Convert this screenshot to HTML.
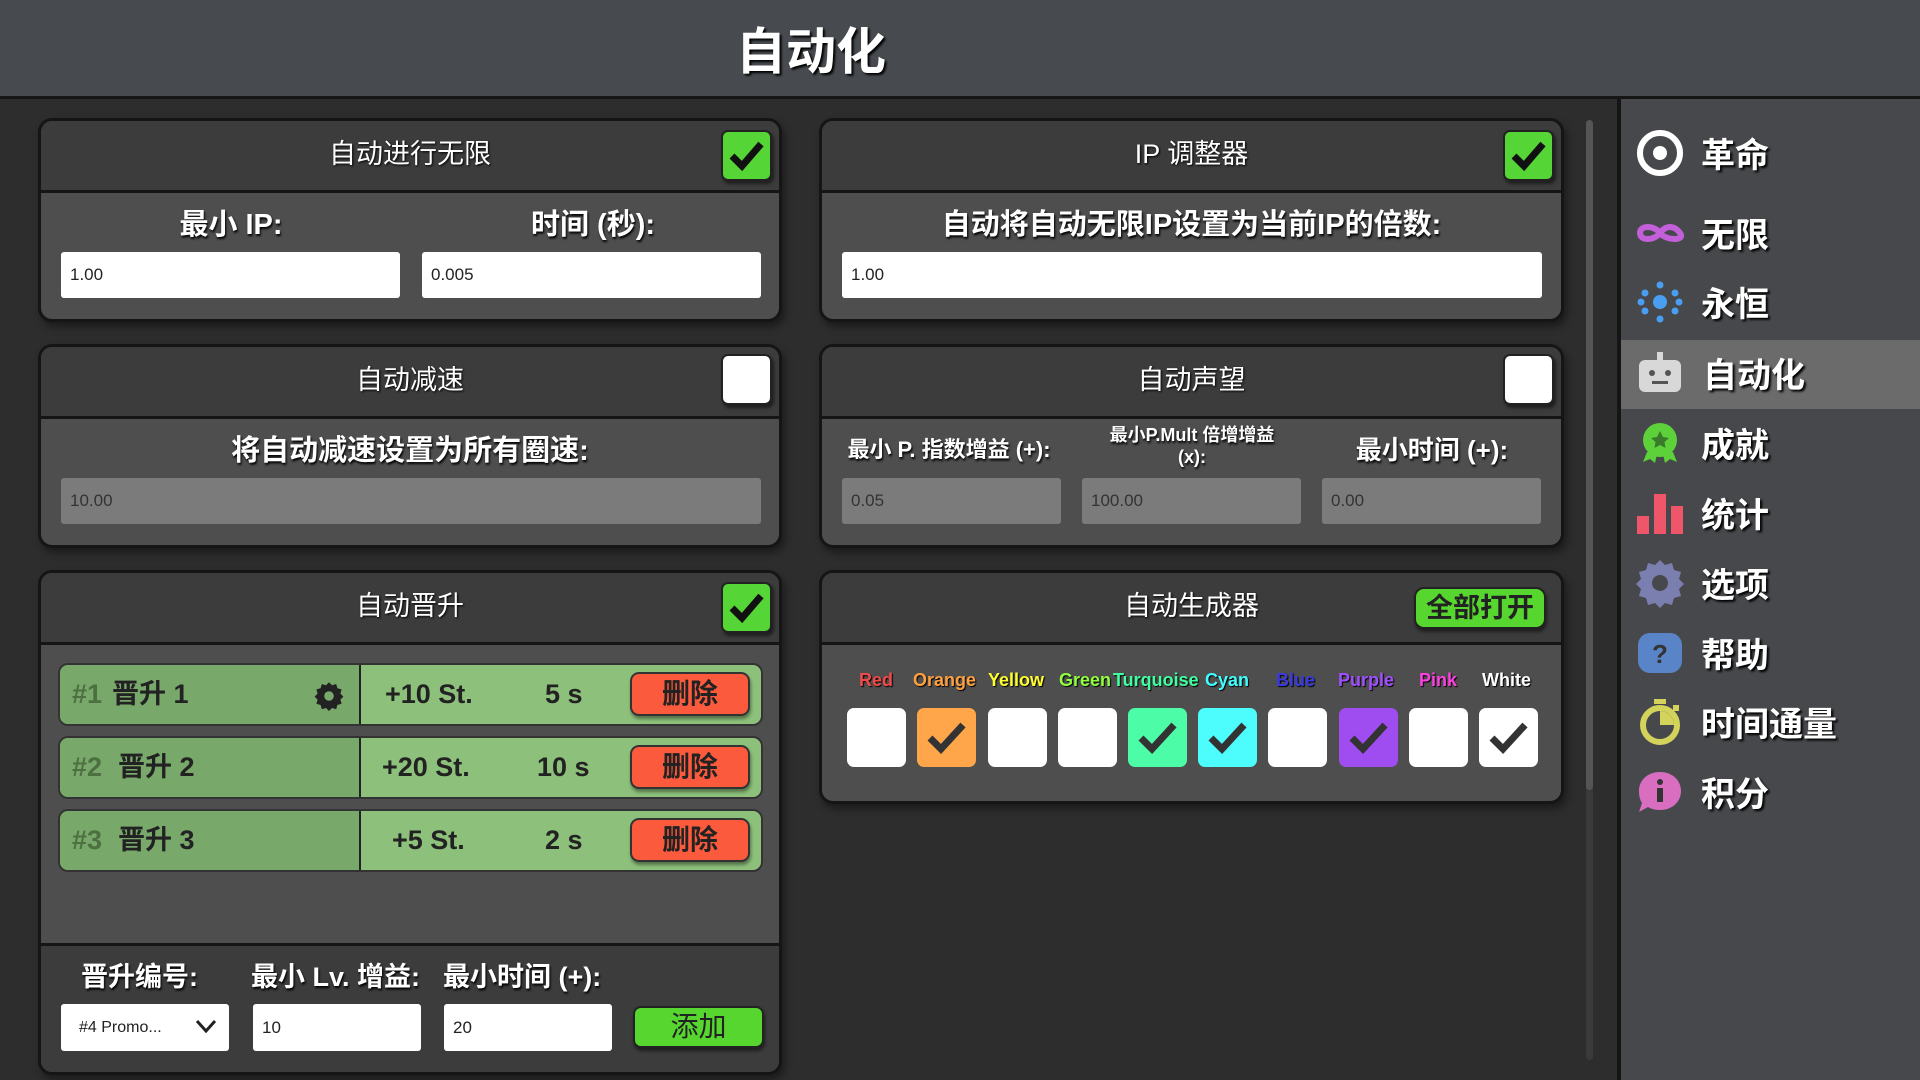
<!DOCTYPE html><html><head><meta charset="utf-8"><style>
*{box-sizing:border-box;margin:0;padding:0}
body{width:1920px;height:1080px;background:#2d2d2d;font-family:"Liberation Sans","Noto Sans CJK SC",sans-serif;color:#fff;position:relative;overflow:hidden}
.a{position:absolute}
#hdr{left:0;top:0;width:1920px;height:99px;background:#474b4f;border-bottom:3px solid #151515}
#hdr span{position:absolute;left:736px;top:12px;font-size:50px;font-weight:bold;text-shadow:2px 2px 2px #000}
.p{position:absolute;border:3px solid #151515;border-radius:14px;background:#4e4e4e;overflow:hidden;box-shadow:3px 5px 8px rgba(0,0,0,.4)}
.ph{position:absolute;left:0;top:0;right:0;background:#3c3c3c;border-bottom:3px solid #151515;font-size:27px;text-align:center;text-shadow:1px 1px 2px #000}
.cb{position:absolute;width:51px;height:51px;border-radius:7px;background:#fff;border:2px solid #222;box-shadow:2px 3px 3px rgba(0,0,0,.5)}
.cb.on{background:#56d636}
.lbl{position:absolute;font-size:29px;font-weight:bold;text-align:center;text-shadow:1px 2px 2px #000}
.in{position:absolute;background:#fff;color:#222;font-size:17px;padding-left:9px;border-radius:3px;display:flex;align-items:center}
.in.d{background:#7b7b7b;color:#333}
.row{position:absolute;left:17px;width:705px;height:63px;border:2px solid #333;border-radius:10px;overflow:hidden;background:#8dc07b;font-weight:bold;font-size:27px;color:#222}
.row .l{position:absolute;left:0;top:0;width:301px;height:100%;background:#79a86b;border-right:2px solid #222}
.row span{position:absolute;top:0;line-height:59px}
.del{position:absolute;left:570px;top:7px;width:120px;height:44px;background:#fc5a3c;border:2px solid #333;border-radius:9px;text-align:center;line-height:40px;font-size:28px;box-shadow:1px 3px 3px rgba(0,0,0,.4)}
.nav{position:absolute;left:1635px;width:50px;height:50px}
.nt{position:absolute;left:1701px;font-size:34px;font-weight:bold;text-shadow:2px 2px 2px #000}
.cl{position:absolute;top:670px;font-size:18px;font-weight:bold;text-shadow:1px 1px 1px #000}
.gb{position:absolute;top:708px;width:59px;height:59px;border-radius:7px;background:#fff}
</style></head><body>
<div id="hdr" class="a"><span>自动化</span></div>
<div class="a" style="left:1586px;top:120px;width:7px;height:940px;background:#3a3a3a;border-radius:4px"></div>
<div class="a" style="left:1586px;top:120px;width:7px;height:670px;background:#555;border-radius:4px"></div>
<div class="a" style="left:1617px;top:99px;width:303px;height:981px;background:#46484b;border-left:4px solid #151515"></div>
<div class="a" style="left:1621px;top:340px;width:299px;height:69px;background:#6b6b6b"></div>
<svg class="nav" style="top:128px" viewBox="0 0 50 50"><circle cx="25" cy="25" r="20" fill="none" stroke="#fff" stroke-width="6"/><circle cx="25" cy="25" r="7" fill="#fff"/></svg>
<svg class="nav" style="top:208px" viewBox="0 0 50 50"><path d="M25 25C19 17 5 17 5 25s14 8 20 0 14-8 20 0-14 8-20 0" fill="none" stroke="#c35fd8" stroke-width="6"/></svg>
<svg class="nav" style="top:277px" viewBox="0 0 50 50" fill="#4a9ef0"><circle cx="25" cy="25" r="7"/><circle cx="25" cy="8" r="3.5"/><circle cx="25" cy="42" r="3.5"/><circle cx="10" cy="16" r="3.5"/><circle cx="40" cy="16" r="3.5"/><circle cx="10" cy="34" r="3.5"/><circle cx="40" cy="34" r="3.5"/><circle cx="6" cy="25" r="3.5"/><circle cx="44" cy="25" r="3.5"/></svg>
<svg class="nav" style="top:348px" viewBox="0 0 50 50"><rect x="4" y="12" width="42" height="32" rx="6" fill="#d8d8d8"/><rect x="22" y="4" width="6" height="9" fill="#d8d8d8"/><circle cx="17" cy="25" r="3" fill="#555"/><circle cx="33" cy="25" r="3" fill="#555"/><rect x="17" y="33" width="16" height="3" fill="#555"/></svg>
<svg class="nav" style="top:418px" viewBox="0 0 50 50"><path d="M12 34l-4 10 7-3 5 4 2-9zM38 34l4 10-7-3-5 4-2-9z" fill="#5dd13a"/><circle cx="25" cy="22" r="17" fill="#5dd13a"/><path d="M25 13l3 6 6 1-4.5 4 1 6-5.5-3-5.5 3 1-6-4.5-4 6-1z" fill="#3a7a2a"/></svg>
<svg class="nav" style="top:488px" viewBox="0 0 50 50" fill="#f0566a"><rect x="2" y="28" width="12" height="18"/><rect x="19" y="6" width="12" height="40"/><rect x="36" y="18" width="12" height="28"/></svg>
<svg class="nav" style="top:558px" viewBox="0 0 50 50"><path d="M25 2l5 5 7-2 2 7 7 2-2 7 5 5-5 5 2 7-7 2-2 7-7-2-5 5-5-5-7 2-2-7-7-2 2-7-5-5 5-5-2-7 7-2 2-7 7 2z" fill="#7b7fb0"/><circle cx="25" cy="25" r="8" fill="#46484b"/></svg>
<svg class="nav" style="top:628px" viewBox="0 0 50 50"><rect x="3" y="5" width="44" height="40" rx="12" fill="#5a84c8"/><text x="25" y="35" font-size="26" font-weight="bold" text-anchor="middle" fill="#333" font-family="Liberation Sans">?</text></svg>
<svg class="nav" style="top:697px" viewBox="0 0 50 50"><circle cx="25" cy="28" r="17" fill="none" stroke="#d3d25a" stroke-width="6"/><path d="M25 28V14a14 14 0 0 1 14 14z" fill="#d3d25a"/><rect x="19" y="2" width="12" height="5" fill="#d3d25a"/><rect x="38" y="8" width="6" height="6" fill="#d3d25a"/></svg>
<svg class="nav" style="top:767px" viewBox="0 0 50 50"><path d="M25 5c12 0 21 8 21 19s-9 19-21 19c-5 0-9-1-12-3l-9 5 3-9c-2-3-3-7-3-12C4 13 13 5 25 5z" fill="#d96ec0"/><circle cx="25" cy="15" r="3" fill="#333"/><rect x="22" y="21" width="6" height="14" fill="#333"/></svg>
<div class="nt" style="top:128px">革命</div>
<div class="nt" style="top:208px">无限</div>
<div class="nt" style="top:277px">永恒</div>
<div class="nt" style="top:348px;left:1703px">自动化</div>
<div class="nt" style="top:418px">成就</div>
<div class="nt" style="top:488px">统计</div>
<div class="nt" style="top:558px">选项</div>
<div class="nt" style="top:628px">帮助</div>
<div class="nt" style="top:697px">时间通量</div>
<div class="nt" style="top:767px">积分</div>

<div class="p" style="left:38px;top:118px;width:744px;height:204px">
<div class="ph" style="height:72px;line-height:66px">自动进行无限</div>
<div class="cb on" style="left:680px;top:9px"><svg width="47" height="47" viewBox="0 0 47 47"><path d="M9 24l10 10 19-22" fill="none" stroke="#111" stroke-width="7"/></svg></div>
<div class="lbl" style="left:20px;width:340px;top:80px">最小 IP:</div>
<div class="lbl" style="left:382px;width:340px;top:80px">时间 (秒):</div>
<div class="in" style="left:20px;top:131px;width:339px;height:46px">1.00</div>
<div class="in" style="left:381px;top:131px;width:339px;height:46px">0.005</div>
</div>
<div class="p" style="left:38px;top:344px;width:744px;height:204px">
<div class="ph" style="height:72px;line-height:66px">自动减速</div>
<div class="cb" style="left:680px;top:7px"></div>
<div class="lbl" style="left:0;width:738px;top:80px">将自动减速设置为所有圈速:</div>
<div class="in d" style="left:20px;top:131px;width:700px;height:46px">10.00</div>
</div>
<div class="p" style="left:38px;top:570px;width:744px;height:505px">
<div class="ph" style="height:72px;line-height:66px">自动晋升</div>
<div class="cb on" style="left:680px;top:9px"><svg width="47" height="47" viewBox="0 0 47 47"><path d="M9 24l10 10 19-22" fill="none" stroke="#111" stroke-width="7"/></svg></div>
<div class="row" style="top:90px"><div class="l"></div><span style="left:12px;color:#4d7040">#1</span><span style="left:52px">晋升 1</span>
<svg class="a" style="left:254px;top:16px" width="30" height="30" viewBox="0 0 50 50"><path d="M25 2l5 5 7-2 2 7 7 2-2 7 5 5-5 5 2 7-7 2-2 7-7-2-5 5-5-5-7 2-2-7-7-2 2-7-5-5 5-5-2-7 7-2 2-7 7 2z" fill="#222"/><circle cx="25" cy="25" r="8" fill="#79a86b"/></svg>
<span style="left:325px">+10 St.</span><span style="left:485px">5 s</span><div class="del">删除</div></div>
<div class="row" style="top:163px"><div class="l"></div><span style="left:12px;color:#4d7040">#2</span><span style="left:58px">晋升 2</span><span style="left:322px">+20 St.</span><span style="left:477px">10 s</span><div class="del">删除</div></div>
<div class="row" style="top:236px"><div class="l"></div><span style="left:12px;color:#4d7040">#3</span><span style="left:58px">晋升 3</span><span style="left:332px">+5 St.</span><span style="left:485px">2 s</span><div class="del">删除</div></div>
<div class="a" style="left:0;top:370px;width:744px;height:135px;background:#3c3c3c;border-top:3px solid #151515"></div>
<div class="lbl" style="left:40px;top:382px;font-size:27px">晋升编号:</div>
<div class="lbl" style="left:210px;top:382px;font-size:27px">最小 Lv. 增益:</div>
<div class="lbl" style="left:402px;top:382px;font-size:27px">最小时间 (+):</div>
<div class="in" style="left:20px;top:431px;width:168px;height:47px;font-size:16px;padding-left:18px">#4 Promo...<svg class="a" style="left:134px;top:14px" width="22" height="16" viewBox="0 0 22 16"><path d="M2 3l9 10 9-10" fill="none" stroke="#222" stroke-width="3"/></svg></div>
<div class="in" style="left:212px;top:431px;width:168px;height:47px">10</div>
<div class="in" style="left:403px;top:431px;width:168px;height:47px">20</div>
<div class="a" style="left:592px;top:433px;width:131px;height:42px;background:#56d62e;border:2px solid #222;border-radius:8px;color:#222;font-size:28px;text-align:center;line-height:38px;box-shadow:1px 3px 3px rgba(0,0,0,.5)">添加</div>
</div>
<div class="p" style="left:819px;top:118px;width:745px;height:204px">
<div class="ph" style="height:72px;line-height:66px">IP 调整器</div>
<div class="cb on" style="left:681px;top:9px"><svg width="47" height="47" viewBox="0 0 47 47"><path d="M9 24l10 10 19-22" fill="none" stroke="#111" stroke-width="7"/></svg></div>
<div class="lbl" style="left:0;width:739px;top:80px">自动将自动无限IP设置为当前IP的倍数:</div>
<div class="in" style="left:20px;top:131px;width:700px;height:46px">1.00</div>
</div>
<div class="p" style="left:819px;top:344px;width:745px;height:204px">
<div class="ph" style="height:72px;line-height:66px">自动声望</div>
<div class="cb" style="left:681px;top:7px"></div>
<div class="lbl" style="left:12px;width:230px;top:85px;font-size:22px">最小 P. 指数增益 (+):</div>
<div class="lbl" style="left:260px;width:220px;top:77px;font-size:18px;line-height:22px">最小P.Mult 倍增增益<br>(x):</div>
<div class="lbl" style="left:500px;width:220px;top:83px;font-size:26px">最小时间 (+):</div>
<div class="in d" style="left:20px;top:131px;width:219px;height:46px">0.05</div>
<div class="in d" style="left:260px;top:131px;width:219px;height:46px">100.00</div>
<div class="in d" style="left:500px;top:131px;width:219px;height:46px">0.00</div>
</div>
<div class="p" style="left:819px;top:570px;width:745px;height:234px">
<div class="ph" style="height:72px;line-height:66px">自动生成器</div>
<div class="a" style="left:592px;top:14px;width:132px;height:42px;background:#56d62e;border:2px solid #222;border-radius:10px;color:#222;font-size:27px;font-weight:bold;text-align:center;line-height:38px;box-shadow:1px 3px 3px rgba(0,0,0,.5)">全部打开</div>
</div>
<div class="cl" style="left:859px;color:#f04a4a">Red</div>
<div class="cl" style="left:913px;color:#ffa040">Orange</div>
<div class="cl" style="left:988px;color:#ffff30">Yellow</div>
<div class="cl" style="left:1059px;color:#90ff40">Green</div>
<div class="cl" style="left:1113px;color:#40ffa0">Turquoise</div>
<div class="cl" style="left:1205px;color:#40ffff">Cyan</div>
<div class="cl" style="left:1276px;color:#3a3ae0">Blue</div>
<div class="cl" style="left:1338px;color:#a050ff">Purple</div>
<div class="cl" style="left:1419px;color:#ff40e0">Pink</div>
<div class="cl" style="left:1482px;color:#fff">White</div>
<div class="gb" style="left:847px"></div>
<div class="gb" style="left:917px;background:#ffa54a"><svg width="59" height="59" viewBox="0 0 59 59"><path d="M13 30l11 11 22-24" fill="none" stroke="#333" stroke-width="7"/></svg></div>
<div class="gb" style="left:988px"></div>
<div class="gb" style="left:1058px"></div>
<div class="gb" style="left:1128px;background:#4dfca6"><svg width="59" height="59" viewBox="0 0 59 59"><path d="M13 30l11 11 22-24" fill="none" stroke="#333" stroke-width="7"/></svg></div>
<div class="gb" style="left:1198px;background:#4dfcfc"><svg width="59" height="59" viewBox="0 0 59 59"><path d="M13 30l11 11 22-24" fill="none" stroke="#333" stroke-width="7"/></svg></div>
<div class="gb" style="left:1268px"></div>
<div class="gb" style="left:1339px;background:#9f4cf0"><svg width="59" height="59" viewBox="0 0 59 59"><path d="M13 30l11 11 22-24" fill="none" stroke="#333" stroke-width="7"/></svg></div>
<div class="gb" style="left:1409px"></div>
<div class="gb" style="left:1479px"><svg width="59" height="59" viewBox="0 0 59 59"><path d="M13 30l11 11 22-24" fill="none" stroke="#333" stroke-width="7"/></svg></div>
</body></html>
